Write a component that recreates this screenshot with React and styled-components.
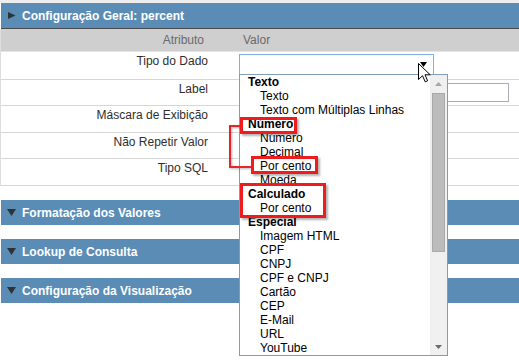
import React from 'react';
import styled, { createGlobalStyle } from 'styled-components';

const GlobalStyle = createGlobalStyle`
  html, body { margin: 0; padding: 0; background: #fff; }
  body {
    font-family: "Liberation Sans", Arial, sans-serif;
    font-size: 12px;
    color: #333;
  }
`;

const Page = styled.div`
  width: 519px;
  height: 362px;
  overflow: hidden;
  box-sizing: border-box;
  border-top: 3px solid #eeeeee;
  display: flex;
  flex-direction: column;
  gap: 14px;
`;

const Section = styled.section`
  margin-left: 1px;
`;

const SectionHeader = styled.div`
  height: 25px;
  display: flex;
  align-items: center;
  padding-left: 6px;
  background: #5a8cb6;
  color: #fff;
  font-weight: bold;
  font-size: 12px;
  border-bottom: ${p => (p.$open ? '1px solid #4a4a4a' : 'none')};
`;

const HeaderIcon = styled.svg`
  width: 9px;
  height: 9px;
  margin-right: 6px;
  flex: none;
`;

const Table = styled.div`
  margin-left: -1px;
  border-left: 1px solid #dddddd;
`;

const HeadRow = styled.div`
  display: grid;
  grid-template-columns: 230px 1fr;
  align-items: center;
  height: 22px;
  background: #cfcfcf;
  color: #6a6a6a;
  border-bottom: 1px solid #e4e4e4;
`;

const HeadCell = styled.div`
  text-align: ${p => (p.$right ? 'right' : 'left')};
  padding: ${p => (p.$right ? '0 27px 0 0' : '0 0 0 12px')};
`;

const Row = styled.div`
  display: grid;
  grid-template-columns: 230px 1fr;
  align-items: start;
  height: ${p => p.$h}px;
  border-bottom: 1px solid #d6d6d6;
`;

const LabelCell = styled.div`
  text-align: right;
  padding: 2px 23px 0 0;
  line-height: 15px;
  color: #2e2e2e;
`;

const ValueCell = styled.div`
  padding: ${p => p.$pt || 2}px 0 0 8px;
  position: relative;
`;

const Select = styled.div`
  position: relative;
  width: 195px;
  height: 21px;
  box-sizing: border-box;
  border: 1px solid #7eb0e4;
  background: #fff;
  z-index: 5;
`;

const SelectArrow = styled.svg`
  position: absolute;
  right: 6px;
  top: 7px;
  width: 7px;
  height: 5px;
`;

const Cursor = styled.svg`
  position: absolute;
  left: 178px;
  top: 8px;
  width: 13px;
  height: 20px;
  z-index: 20;
`;

const TextInput = styled.div`
  width: 270px;
  height: 19px;
  box-sizing: border-box;
  border: 1px solid #a9adb3;
  background: #fff;
`;

const List = styled.div`
  position: absolute;
  left: -1px;
  top: 19px;
  width: 209px;
  height: 282px;
  box-sizing: border-box;
  border: 1px solid #7f9db9;
  background: #fff;
  display: flex;
  z-index: 10;
`;

const Options = styled.div`
  flex: 1;
  min-height: 0;
  overflow: hidden;
  color: #000;
`;

const Item = styled.div`
  height: 14px;
  line-height: 14px;
  white-space: nowrap;
  font-weight: ${p => (p.$group ? 'bold' : 'normal')};
  padding-left: ${p => (p.$group ? 8 : 20)}px;
`;

const Scrollbar = styled.div`
  width: 17px;
  flex: none;
  background: #f0f0f0;
  display: flex;
  flex-direction: column;
`;

const ScrollButton = styled.div`
  height: 17px;
  flex: none;
  display: flex;
  align-items: center;
  justify-content: center;
`;

const Thumb = styled.div`
  height: 159px;
  margin: 1px 2px 0 2px;
  box-sizing: border-box;
  background: #bcbcbc;
  border: 1px solid #a9a9a9;
`;

const Track = styled.div`
  flex: 1;
`;

const Mark = styled.div`
  position: absolute;
  left: ${p => p.$x}px;
  top: ${p => p.$y}px;
  width: ${p => p.$w}px;
  height: ${p => p.$h}px;
  box-sizing: border-box;
  border: 3px solid #ee1c1c;
  box-shadow: 2px 2px 2px rgba(0, 0, 0, 0.3);
  pointer-events: none;
`;

const Connector = styled.svg`
  position: absolute;
  left: -11px;
  top: 50px;
  width: 24px;
  height: 44px;
  overflow: visible;
  filter: drop-shadow(1px 1px 1px rgba(0, 0, 0, 0.3));
`;

const groups = [
  { label: 'Texto', options: ['Texto', 'Texto com Múltiplas Linhas'] },
  { label: 'Número', options: ['Número', 'Decimal', 'Por cento', 'Moeda'] },
  { label: 'Calculado', options: ['Por cento'] },
  {
    label: 'Especial',
    options: ['Imagem HTML', 'CPF', 'CNPJ', 'CPF e CNPJ', 'Cartão', 'CEP', 'E-Mail', 'URL', 'YouTube'],
  },
];

const RightTri = () => (
  <HeaderIcon viewBox="0 0 9 9">
    <polygon points="1,1 8.5,4.5 1,8" fill="#2e3338" />
  </HeaderIcon>
);

const DownTri = () => (
  <HeaderIcon viewBox="0 0 9 9">
    <polygon points="0,1 9,1 4.5,8" fill="#2e3338" />
  </HeaderIcon>
);

function Dropdown() {
  return (
    <List>
      <Options>
        {groups.map(g => (
          <React.Fragment key={g.label}>
            <Item $group>{g.label}</Item>
            {g.options.map((o, i) => (
              <Item key={g.label + i}>{o}</Item>
            ))}
          </React.Fragment>
        ))}
      </Options>
      <Scrollbar>
        <ScrollButton>
          <svg width="7" height="4" viewBox="0 0 7 4">
            <polygon points="0,4 7,4 3.5,0" fill="#a6a6a6" />
          </svg>
        </ScrollButton>
        <Thumb />
        <Track />
        <ScrollButton>
          <svg width="7" height="4" viewBox="0 0 7 4">
            <polygon points="0,0 7,0 3.5,4" fill="#6a6a6a" />
          </svg>
        </ScrollButton>
      </Scrollbar>
      <Connector viewBox="0 0 24 44">
        <polyline points="12,1 1,1 1,42 23,42" fill="none" stroke="#e8232b" strokeWidth="2" />
      </Connector>
      <Mark $x={0} $y={42} $w={57} $h={17} />
      <Mark $x={11} $y={81} $w={67} $h={18} />
      <Mark $x={0} $y={108} $w={86} $h={35} />
    </List>
  );
}

const rows = [
  { label: 'Tipo do Dado', h: 27 },
  { label: 'Label', h: 25 },
  { label: 'Máscara de Exibição', h: 26 },
  { label: 'Não Repetir Valor', h: 25 },
  { label: 'Tipo SQL', h: 26 },
];

export default function App() {
  return (
    <>
      <GlobalStyle />
      <Page>
        <Section>
          <SectionHeader $open>
            <RightTri />
            Configuração Geral: percent
          </SectionHeader>
          <Table>
            <HeadRow>
              <HeadCell $right>Atributo</HeadCell>
              <HeadCell>Valor</HeadCell>
            </HeadRow>
            {rows.map((r, i) => (
              <Row key={r.label} $h={r.h}>
                <LabelCell>{r.label}</LabelCell>
                {i === 0 && (
                  <ValueCell $pt={2}>
                    <Select>
                      <SelectArrow viewBox="0 0 7 5">
                        <polygon points="0,0 7,0 3.5,5" fill="#000" />
                      </SelectArrow>
                      <Cursor viewBox="0 0 13 20">
                        <path
                          d="M0.5,0.5 L0.5,16.5 L4.5,12.7 L7.2,18.8 L9.6,17.8 L7,11.8 L12.2,11.8 Z"
                          fill="#fff"
                          stroke="#000"
                          strokeWidth="1"
                          strokeLinejoin="miter"
                        />
                      </Cursor>
                      <Dropdown />
                    </Select>
                  </ValueCell>
                )}
                {i === 1 && (
                  <ValueCell $pt={3}>
                    <TextInput />
                  </ValueCell>
                )}
                {i > 1 && <ValueCell />}
              </Row>
            ))}
          </Table>
        </Section>
        <Section>
          <SectionHeader>
            <DownTri />
            Formatação dos Valores
          </SectionHeader>
        </Section>
        <Section>
          <SectionHeader>
            <DownTri />
            Lookup de Consulta
          </SectionHeader>
        </Section>
        <Section>
          <SectionHeader>
            <DownTri />
            Configuração da Visualização
          </SectionHeader>
        </Section>
      </Page>
    </>
  );
}
